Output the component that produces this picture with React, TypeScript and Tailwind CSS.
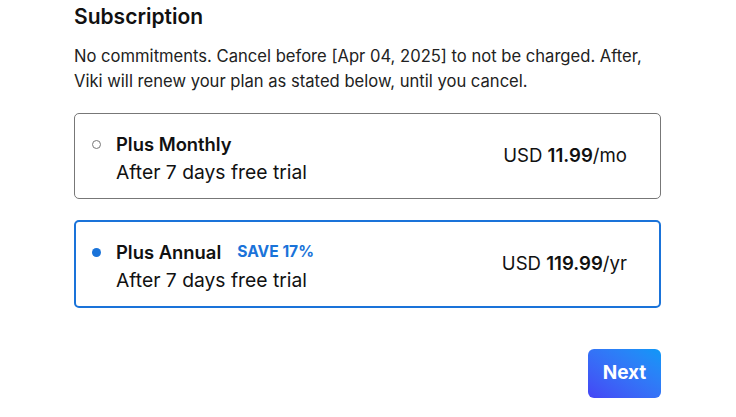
import React, { useState } from "react";

const plans = [
  { id: "monthly", name: "Plus Monthly", price: "11.99", unit: "/mo", save: "" },
  { id: "annual", name: "Plus Annual", price: "119.99", unit: "/yr", save: "SAVE 17%" },
];

export default function App() {
  const [selected, setSelected] = useState("annual");

  return (
    <div
      className="w-[736px] h-[417px] bg-white text-[#111]"
      style={{ fontFamily: "Inter, 'Noto Sans', sans-serif" }}
    >
      <div className="ml-[74px] w-[587px] pt-[3px]">
        <h2 className="text-[21px] leading-[28px] font-semibold">Subscription</h2>
        <p className="mt-[13px] text-[16.6px] leading-[25px] text-[#222]">
          No commitments. Cancel before [Apr 04, 2025] to not be charged. After,
          Viki will renew your plan as stated below, until you cancel.
        </p>

        <div className="mt-[19px] flex flex-col gap-[21px]">
          {plans.map((plan) => {
            const active = selected === plan.id;
            return (
              <button
                key={plan.id}
                onClick={() => setSelected(plan.id)}
                className={
                  active
                    ? "flex items-center h-[88px] rounded-[5px] border-2 border-[#1a73d9] pl-[16px] pr-[32px] text-left"
                    : "flex items-center h-[86px] rounded-[5px] border border-[#777] pl-[17px] pr-[33px] text-left"
                }
              >
                <span className="w-[24px] flex items-center self-start pt-[26px]">
                  {active ? (
                    <span className="w-[9px] h-[9px] rounded-full bg-[#1a73d9]"></span>
                  ) : (
                    <span className="w-[9px] h-[9px] rounded-full border border-[#777]"></span>
                  )}
                </span>
                <span className="flex-1 flex flex-col pt-[4px]">
                  <span className="flex items-center gap-[16px]">
                    <span className="text-[18.4px] leading-[28px] font-semibold">{plan.name}</span>
                    {plan.save && (
                      <span className="text-[15.6px] font-bold text-[#1a73d9]">{plan.save}</span>
                    )}
                  </span>
                  <span className="text-[19.3px] leading-[28px]">After 7 days free trial</span>
                </span>
                <span className="text-[18.6px]">
                  USD <span className="font-semibold">{plan.price}</span>
                  {plan.unit}
                </span>
              </button>
            );
          })}
        </div>

        <div className="mt-[41px] flex justify-end">
          <button className="w-[73px] h-[49px] rounded-[6px] bg-gradient-to-tr from-[#4444f5] to-[#0a98f7] text-white text-[19px] font-bold">
            Next
          </button>
        </div>
      </div>
    </div>
  );
}
